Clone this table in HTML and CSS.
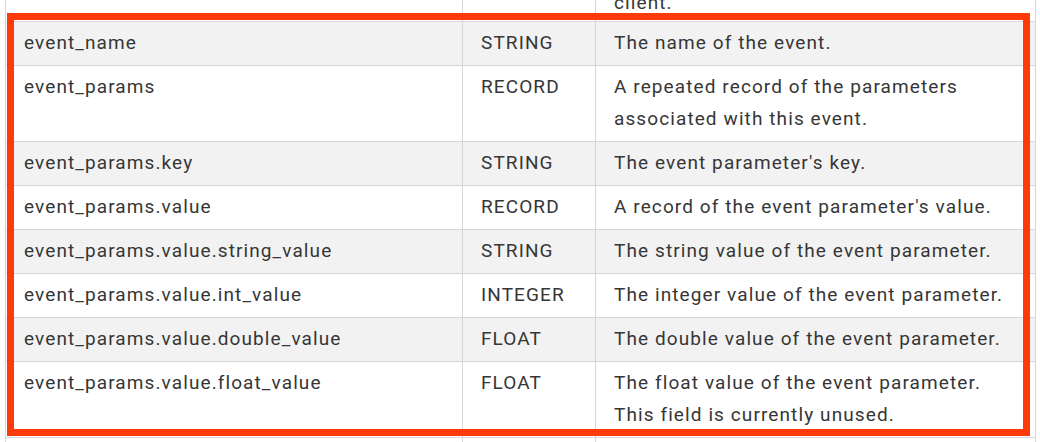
FILE: index.html
```html
<!DOCTYPE html>
<html>
<head>
<meta charset="utf-8">
<link rel="stylesheet" href="styles.css">
</head>
<body>
<div class="page">
  <div class="wrap">
    <table class="schema">
      <tbody>
        <tr class="prev"><td></td><td></td><td>client.</td></tr>
        <tr class="shade"><td>event_name</td><td>STRING</td><td>The name of the event.</td></tr>
        <tr><td>event_params</td><td>RECORD</td><td>A repeated record of the parameters<br>associated with this event.</td></tr>
        <tr class="shade"><td>event_params.key</td><td>STRING</td><td>The event parameter's key.</td></tr>
        <tr><td>event_params.value</td><td>RECORD</td><td>A record of the event parameter's value.</td></tr>
        <tr class="shade"><td>event_params.value.string_value</td><td>STRING</td><td>The string value of the event parameter.</td></tr>
        <tr><td>event_params.value.int_value</td><td>INTEGER</td><td>The integer value of the event parameter.</td></tr>
        <tr class="shade"><td>event_params.value.double_value</td><td>FLOAT</td><td>The double value of the event parameter.</td></tr>
        <tr><td>event_params.value.float_value</td><td>FLOAT</td><td>The float value of the event parameter.<br>This field is currently unused.</td></tr>
        <tr class="next"><td></td><td></td><td></td></tr>
      </tbody>
    </table>
    <div class="highlight"></div>
  </div>
</div>
</body>
</html>
```
FILE: styles.css
```css
html, body {
  margin: 0;
  padding: 0;
  background: #ffffff;
  overflow: hidden;
}
.page {
  width: 1040px;
  height: 442px;
  overflow: hidden;
  padding-left: 5px;
  box-sizing: border-box;
}
.wrap {
  position: relative;
  margin-top: -23px;
  width: 1031px;
}
.schema {
  border-collapse: collapse;
  width: 1031px;
  table-layout: fixed;
  font-family: Roboto, "Liberation Sans", sans-serif;
  font-size: 19px;
  letter-spacing: 1.1px;
  color: #363636;
  border: 1px solid #d6d6d6;
}
.schema td {
  border: 1px solid #d6d6d6;
  padding: 5px 6px 6px 18px;
  line-height: 32px;
  vertical-align: top;
  white-space: nowrap;
  overflow: hidden;
}
.schema td:nth-child(1) { width: 457px; box-sizing: border-box; }
.schema td:nth-child(2) { width: 133px; box-sizing: border-box; }
.schema tr.shade td { background: #f2f2f2; }
.schema tr.prev td { height: 44px; box-sizing: border-box; padding-top: 9px; padding-bottom: 2px; }
.schema tr.next td { height: 44px; box-sizing: border-box; }
.highlight {
  position: absolute;
  left: 2px;
  top: 36px;
  width: 1023px;
  height: 423px;
  box-sizing: border-box;
  border: 7px solid #fd3a0c;
  pointer-events: none;
}
```
